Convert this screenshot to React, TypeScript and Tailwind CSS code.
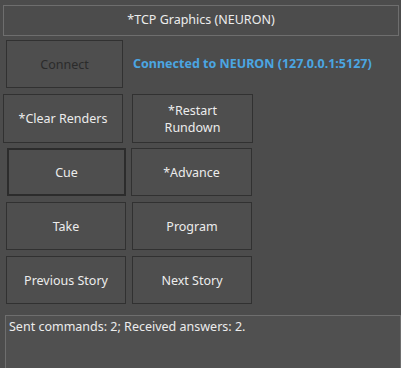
import React from "react";

const font = { fontFamily: '"Noto Sans", "Open Sans", sans-serif' };

function Btn({ children, className = "" }: { children: React.ReactNode; className?: string }) {
  return (
    <div
      className={
        "flex items-center justify-center text-center leading-[17px] text-[12.5px] text-[#ececec] bg-[#4e4e4e] border border-[#313131] " +
        className
      }
    >
      {children}
    </div>
  );
}

export default function App() {
  return (
    <div
      className="w-[401px] h-[368px] bg-[#4c4c4c] overflow-hidden flex flex-col"
      style={font}
    >
      <div className="mt-[5px] ml-[3px] w-[396px] h-[31px] border border-[#6e6e6e] flex items-center justify-center text-[12.5px] text-[#ececec]">
        *TCP Graphics (NEURON)
      </div>
      <div className="mt-[4px] flex items-center">
        <Btn className="ml-[6px] w-[117px] h-[48px] !text-[#2b2b2b]">Connect</Btn>
        <div className="ml-[10px] text-[12.5px] font-bold text-[#4ba6e2]">
          Connected to NEURON (127.0.0.1:5127)
        </div>
      </div>
      <div className="mt-[6px] flex">
        <Btn className="ml-[3px] w-[120px] h-[49px]">*Clear Renders</Btn>
        <Btn className="ml-[9px] w-[121px] h-[49px]">
          *Restart
          <br />
          Rundown
        </Btn>
      </div>
      <div className="mt-[5px] flex">
        <Btn className="ml-[7px] w-[119px] h-[48px] !border-2 !border-[#2c2c2c]">Cue</Btn>
        <Btn className="ml-[5px] w-[121px] h-[48px]">*Advance</Btn>
      </div>
      <div className="mt-[6px] flex">
        <Btn className="ml-[6px] w-[120px] h-[48px]">Take</Btn>
        <Btn className="ml-[6px] w-[120px] h-[48px]">Program</Btn>
      </div>
      <div className="mt-[6px] flex">
        <Btn className="ml-[6px] w-[120px] h-[48px]">Previous Story</Btn>
        <Btn className="ml-[6px] w-[120px] h-[48px]">Next Story</Btn>
      </div>
      <div className="mt-[11px] ml-[5px] w-[396px] flex-1 bg-[#505050] border-t border-l border-r border-[#6e6e6e] px-[3px] pt-[2px] text-[12.5px] text-[#ececec]">
        Sent commands: 2; Received answers: 2.
      </div>
    </div>
  );
}
